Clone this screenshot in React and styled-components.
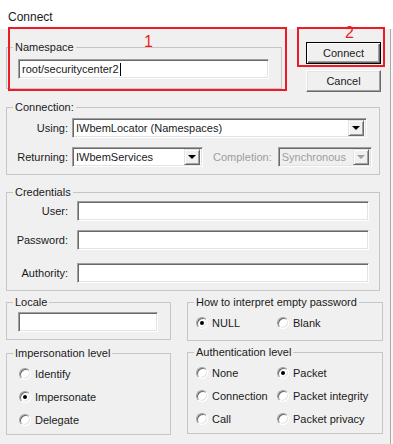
import styled, { createGlobalStyle } from "styled-components";

const GlobalStyle = createGlobalStyle`
  html, body {
    margin: 0;
    padding: 0;
    background: #ffffff;
  }
  body {
    font-family: "Liberation Sans", Arial, sans-serif;
    font-size: 11px;
    color: #1a1a1a;
  }
`;

const Page = styled.div`
  position: relative;
  width: 393px;
  height: 444px;
  overflow: hidden;
  display: flex;
  flex-direction: column;
`;

const TitleBar = styled.div`
  height: 29px;
  box-sizing: border-box;
  padding: 10px 0 0 8px;
  font-size: 12px;
  line-height: 14px;
`;

const Body = styled.div`
  flex: 1;
  display: flex;
`;

const Dialog = styled.div`
  width: 390px;
  box-sizing: border-box;
  background: #f0f0f0;
  padding: 12px 0 0 6px;
  display: flex;
  flex-direction: column;
`;

const Edge = styled.div`
  flex: 1;
  background: #f7f7f7;
  border-left: 1px solid #a9a9a9;
`;

const TopRow = styled.div`
  display: flex;
  align-items: flex-start;
`;

const ButtonColumn = styled.div`
  display: flex;
  flex-direction: column;
  gap: 6px;
  margin: 1px 0 0 24px;
`;

const Button = styled.button`
  width: 75px;
  height: 22px;
  box-sizing: border-box;
  padding: 0;
  font-family: inherit;
  font-size: 11px;
  color: #1a1a1a;
  background: #f0f0f0;
  border: 1px solid;
  border-color: ${(p) => (p.$default ? "#000" : "#fff #696969 #696969 #fff")};
  box-shadow: ${(p) =>
    p.$default
      ? "inset 1px 1px 0 #fff, inset -1px -1px 0 #696969, inset -2px -2px 0 #a0a0a0"
      : "inset -1px -1px 0 #a0a0a0, inset 1px 1px 0 #e3e3e3"};
`;

const GroupBox = styled.fieldset`
  margin: ${(p) => p.$mt || 0}px 0 0 0;
  padding: 0;
  width: ${(p) => p.$w}px;
  box-sizing: border-box;
  border: 1px solid #c6c6c6;
  min-width: 0;
`;

const Legend = styled.legend`
  margin-left: 6px;
  padding: 0 2px;
  font-size: 11px;
  line-height: 13px;
`;

const GroupBody = styled.div`
  padding: ${(p) => p.$pad};
  display: flex;
  flex-direction: column;
`;

const sunken = `
  border: 1px solid;
  border-color: #a0a0a0 #ffffff #ffffff #a0a0a0;
  box-shadow: inset 1px 1px 0 #696969, inset -1px -1px 0 #e3e3e3;
`;

const TextBox = styled.div`
  ${sunken}
  box-sizing: border-box;
  width: ${(p) => p.$w}px;
  height: 20px;
  background: #fff;
  padding: 0 3px;
  display: flex;
  align-items: center;
  white-space: nowrap;
  overflow: hidden;
`;

const Caret = styled.span`
  display: inline-block;
  width: 1px;
  height: 13px;
  background: #000;
  margin-left: 1px;
`;

const FieldRow = styled.div`
  display: flex;
  align-items: center;
  margin-top: ${(p) => p.$mt || 0}px;
`;

const FieldLabel = styled.span`
  width: 61px;
  text-align: right;
  margin-right: ${(p) => p.$gap}px;
  white-space: nowrap;
`;

const InlineLabel = styled.span`
  margin: 0 6px 0 10px;
  color: #9d9d9d;
  white-space: nowrap;
`;

const Combo = styled.div`
  ${sunken}
  box-sizing: border-box;
  width: ${(p) => p.$w}px;
  height: 20px;
  background: ${(p) => (p.$disabled ? "#f0f0f0" : "#fff")};
  color: ${(p) => (p.$disabled ? "#9d9d9d" : "inherit")};
  display: flex;
  align-items: center;
  padding: 2px 2px 2px 3px;
`;

const ComboText = styled.span`
  flex: 1;
  white-space: nowrap;
  overflow: hidden;
`;

const DropButton = styled.span`
  width: 16px;
  height: 16px;
  box-sizing: border-box;
  background: #f0f0f0;
  border: 1px solid;
  border-color: #e3e3e3 #696969 #696969 #e3e3e3;
  box-shadow: inset 1px 1px 0 #fff, inset -1px -1px 0 #a0a0a0;
  display: flex;
  align-items: center;
  justify-content: center;
  &::after {
    content: "";
    border-left: 4px solid transparent;
    border-right: 4px solid transparent;
    border-top: 4px solid ${(p) => (p.$disabled ? "#a0a0a0" : "#000")};
  }
`;

const Columns = styled.div`
  display: flex;
  gap: 16px;
  align-items: flex-start;
`;

const Column = styled.div`
  display: flex;
  flex-direction: column;
`;

const RadioGrid = styled.div`
  display: grid;
  grid-template-columns: ${(p) => p.$cols || "auto"};
  row-gap: 7px;
`;

const RadioItem = styled.label`
  display: flex;
  align-items: center;
  height: 16px;
  gap: 4px;
  white-space: nowrap;
`;

const RadioDot = styled.span`
  position: relative;
  width: 12px;
  height: 12px;
  box-sizing: border-box;
  border-radius: 50%;
  background: #fff;
  border: 1px solid;
  border-color: #a0a0a0 #ffffff #ffffff #a0a0a0;
  box-shadow: inset 1px 1px 0 #696969, inset -1px -1px 0 #e3e3e3;
  &::after {
    content: "";
    display: ${(p) => (p.$checked ? "block" : "none")};
    position: absolute;
    left: 3px;
    top: 3px;
    width: 4px;
    height: 4px;
    border-radius: 50%;
    background: #000;
  }
`;

const Highlight = styled.div`
  position: absolute;
  left: ${(p) => p.$x}px;
  top: ${(p) => p.$y}px;
  width: ${(p) => p.$w}px;
  height: ${(p) => p.$h}px;
  box-sizing: border-box;
  border: 2px solid #ed1c24;
  pointer-events: none;
`;

const Marker = styled.span`
  position: absolute;
  left: ${(p) => p.$x}px;
  top: ${(p) => p.$y}px;
  color: #ed1c24;
  font-size: 16px;
  line-height: 16px;
`;

function Radio({ label, checked }) {
  return (
    <RadioItem>
      <RadioDot $checked={checked} />
      {label}
    </RadioItem>
  );
}

export default function App() {
  return (
    <Page>
      <GlobalStyle />
      <TitleBar>Connect</TitleBar>
      <Body>
        <Dialog>
          <TopRow>
            <GroupBox $w={276}>
              <Legend>Namespace</Legend>
              <GroupBody $pad="5px 0 9px 11px">
                <TextBox $w={251}>
                  root/securitycenter2
                  <Caret />
                </TextBox>
              </GroupBody>
            </GroupBox>
            <ButtonColumn>
              <Button $default>Connect</Button>
              <Button>Cancel</Button>
            </ButtonColumn>
          </TopRow>

          <GroupBox $w={374} $mt={9}>
            <Legend>Connection:</Legend>
            <GroupBody $pad="4px 0 7px 0">
              <FieldRow>
                <FieldLabel $gap={4}>Using:</FieldLabel>
                <Combo $w={295}>
                  <ComboText>IWbemLocator (Namespaces)</ComboText>
                  <DropButton />
                </Combo>
              </FieldRow>
              <FieldRow $mt={9}>
                <FieldLabel $gap={4}>Returning:</FieldLabel>
                <Combo $w={131}>
                  <ComboText>IWbemServices</ComboText>
                  <DropButton />
                </Combo>
                <InlineLabel>Completion:</InlineLabel>
                <Combo $w={94} $disabled>
                  <ComboText>Synchronous</ComboText>
                  <DropButton $disabled />
                </Combo>
              </FieldRow>
            </GroupBody>
          </GroupBox>

          <GroupBox $w={374} $mt={11}>
            <Legend>Credentials</Legend>
            <GroupBody $pad="2px 0 7px 0">
              <FieldRow>
                <FieldLabel $gap={9}>User:</FieldLabel>
                <TextBox $w={292} />
              </FieldRow>
              <FieldRow $mt={9}>
                <FieldLabel $gap={9}>Password:</FieldLabel>
                <TextBox $w={292} />
              </FieldRow>
              <FieldRow $mt={13}>
                <FieldLabel $gap={9}>Authority:</FieldLabel>
                <TextBox $w={292} />
              </FieldRow>
            </GroupBody>
          </GroupBox>

          <Columns>
            <Column>
              <GroupBox $w={165} $mt={5}>
                <Legend>Locale</Legend>
                <GroupBody $pad="3px 0 7px 11px">
                  <TextBox $w={140} />
                </GroupBody>
              </GroupBox>
              <GroupBox $w={165} $mt={7}>
                <Legend>Impersonation level</Legend>
                <GroupBody $pad="6px 0 6px 12px">
                  <RadioGrid>
                    <Radio label="Identify" />
                    <Radio label="Impersonate" checked />
                    <Radio label="Delegate" />
                  </RadioGrid>
                </GroupBody>
              </GroupBox>
            </Column>
            <Column>
              <GroupBox $w={196} $mt={5}>
                <Legend>How to interpret empty password</Legend>
                <GroupBody $pad="6px 0 9px 8px">
                  <RadioGrid $cols="81px auto">
                    <Radio label="NULL" checked />
                    <Radio label="Blank" />
                  </RadioGrid>
                </GroupBody>
              </GroupBox>
              <GroupBox $w={196} $mt={5}>
                <Legend>Authentication level</Legend>
                <GroupBody $pad="6px 0 6px 8px">
                  <RadioGrid $cols="81px auto">
                    <Radio label="None" />
                    <Radio label="Packet" checked />
                    <Radio label="Connection" />
                    <Radio label="Packet integrity" />
                    <Radio label="Call" />
                    <Radio label="Packet privacy" />
                  </RadioGrid>
                </GroupBody>
              </GroupBox>
            </Column>
          </Columns>
        </Dialog>
        <Edge />
      </Body>

      <Highlight $x={8} $y={27} $w={279} $h={64} />
      <Marker $x={144} $y={34}>1</Marker>
      <Highlight $x={297} $y={27} $w={88} $h={40} />
      <Marker $x={345} $y={25}>2</Marker>
    </Page>
  );
}
